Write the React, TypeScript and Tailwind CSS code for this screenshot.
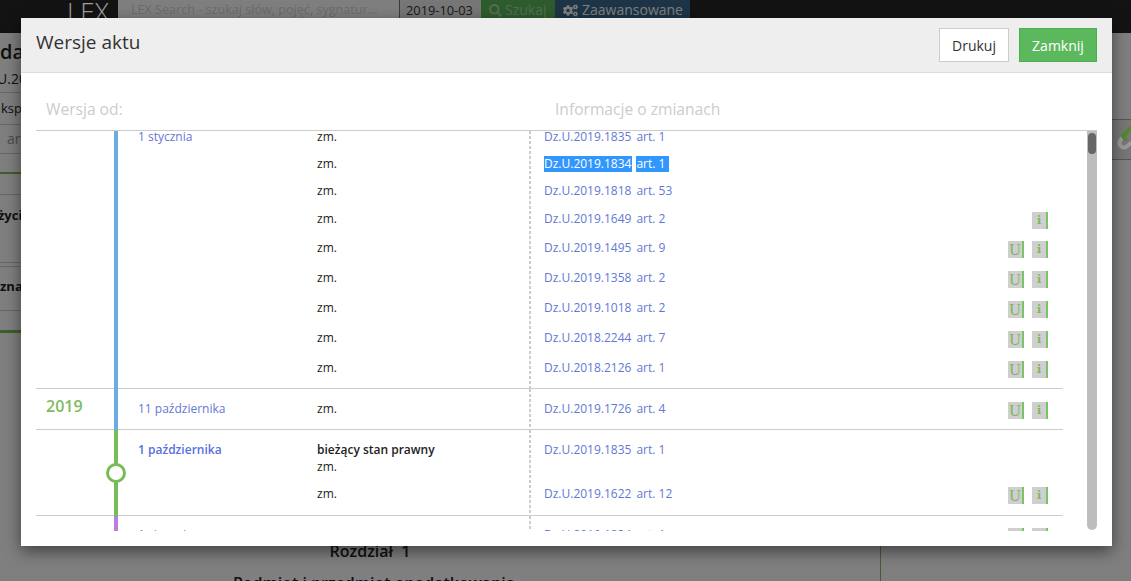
import React from 'react';
import { FaCogs, FaSearch } from 'react-icons/fa';

interface RefRow {
    id: string;
    art: string;
    height: string;
    u?: boolean;
    i?: boolean;
    selected?: boolean;
}

const januaryRows: RefRow[] = [
    { id: "Dz.U.2019.1835", art: "art. 1", height: "h-[27px]" },
    { id: "Dz.U.2019.1834", art: "art. 1", height: "h-[27px]", selected: true },
    { id: "Dz.U.2019.1818", art: "art. 53", height: "h-[27px]" },
    { id: "Dz.U.2019.1649", art: "art. 2", height: "h-[29px]", i: true },
    { id: "Dz.U.2019.1495", art: "art. 9", height: "h-[30px]", u: true, i: true },
    { id: "Dz.U.2019.1358", art: "art. 2", height: "h-[30px]", u: true, i: true },
    { id: "Dz.U.2019.1018", art: "art. 2", height: "h-[30px]", u: true, i: true },
    { id: "Dz.U.2018.2244", art: "art. 7", height: "h-[30px]", u: true, i: true },
    { id: "Dz.U.2018.2126", art: "art. 1", height: "h-[30px]", u: true, i: true },
];

// dotted separator in front of the references column
const dots = "bg-[repeating-linear-gradient(#ccc_0_3px,transparent_3px_5px)] bg-[length:2px_100%] bg-no-repeat";

const Badges: React.FC<{ u?: boolean; i?: boolean }> = ({ u, i }) => (
    <div className="ml-auto mt-[3px] flex gap-[8px] text-[#7db65c]">
        {u && <span className="flex h-[17px] w-4 items-center justify-center border-r-2 border-[#7cc267] bg-[#cfcfcf] font-['Liberation_Serif',serif] text-[16px] leading-none">U</span>}
        {i && <span className="flex h-[17px] w-4 items-center justify-center border-r-2 border-[#7cc267] bg-[#cfcfcf] font-['DejaVu_Serif',serif] text-[11px] font-bold leading-none">i</span>}
    </div>
);

const RefLine: React.FC<{ row: RefRow }> = ({ row }) => (
    <div className={`flex items-center ${row.height}`}>
        <span className={`leading-4 ${row.selected ? 'bg-[#3297fd] text-white' : 'text-[#6378d4]'} pr-px`}>{row.id}</span>
        <span className={`ml-[4px] leading-4 ${row.selected ? 'bg-[#3297fd] pr-[4px] text-white' : 'text-[#6378d4]'}`}>{row.art}</span>
        {(row.u || row.i) && <Badges u={row.u} i={row.i} />}
    </div>
);

const App: React.FC = () => {
    return (
        <div className="relative h-[581px] w-full overflow-hidden bg-white font-['Open_Sans',sans-serif] text-[#222]">

            {/* Page behind the dialog */}
            <header className="flex h-[33px] bg-[#262626] pl-[67px] text-[14px] leading-5">
                <div className="relative z-10 w-[51px] text-[26px] font-light leading-[22px] text-[#a0a0a0]">LEX</div>
                <div className="w-[281px] overflow-hidden whitespace-nowrap bg-[#fff] pl-[13px] text-[12.6px] text-[#d8d8d8]">LEX Search - szukaj słów, pojęć, sygnatur...</div>
                <div className="w-[82px] border-l border-[#777] bg-[#eee] pl-[6px] text-[12.8px] text-[#333]">2019-10-03</div>
                <div className="flex w-[74px] items-start gap-[3px] bg-[#5cb85c] pl-[8px] pt-[3px] text-[#a8d8a0]">
                    <FaSearch size={13} className="mt-[1px]" />
                    <span className="-mt-[3px]">Szukaj</span>
                </div>
                <div className="flex w-[135px] items-start gap-[4px] bg-[#3a6a8e] pl-[8px] pt-[3px] text-white">
                    <FaCogs size={15} />
                    <span className="-mt-[3px]">Zaawansowane</span>
                </div>
            </header>

            <div className="flex">
                <main className="w-[881px] border-r border-[#8fb57d]">
                    <div className="h-[60px] overflow-hidden border-b border-[#ccc] pt-[6px]">
                        <div className="text-[20px] font-semibold leading-[26px]">daw</div>
                        <div className="-ml-[3px] mt-[4px] text-[14px] leading-5">U.20</div>
                    </div>
                    <div className="flex h-[32px] items-center border-b border-[#ccc] pl-px text-[13px]">ksp</div>
                    <div className="flex h-[29px] items-center border-b border-[#ccc] pb-[2px] pl-[7px] text-[14px] text-[#999]">art</div>
                    <div className="h-[20px] border-b-2 border-[#7cbf5b]" />
                    <div className="h-[21px] border-b border-[#ccc]" />
                    <div className="h-[68px] border-b border-[#ccc] pt-[10px] text-[13px] font-bold leading-5">
                        <div className="-ml-[2px]">życi</div>
                    </div>
                    <div className="h-[4px] border-b border-[#ccc]" />
                    <div className="flex h-[44px] items-center border-b border-[#ccc] pb-[4px] text-[13px] font-bold">zna</div>
                    <div className="h-[22px] border-b-[3px] border-[#7cbf5b]" />
                    <div className="w-[744px] pt-[207px] text-center text-[16px] font-semibold">
                        <div className="pr-[4px] leading-[22px]">Rozdział&nbsp; 1</div>
                        <div className="mt-[10px] pl-[4px] leading-[22px]">Podmiot i przedmiot opodatkowania</div>
                    </div>
                </main>
                <aside className="flex-1 overflow-hidden pt-[86px]">
                    <div className="flex h-[41px] items-start justify-end border-y border-[#aaa] bg-[#eee]">
                        <svg viewBox="0 0 28 30" className="relative z-10 -mr-[14px] mt-[1px] h-[30px] w-7 shrink-0" fill="none" strokeWidth="4" strokeLinecap="round" strokeLinejoin="round">
                            <path d="M6 16 L3 20 a4.5 4.5 0 0 0 6 6 L14 22" stroke="#9a9a9a" />
                            <path d="M8 18 L6 15 L16 5" stroke="#4f8a2f" />
                        </svg>
                    </div>
                </aside>
            </div>

            {/* Backdrop */}
            <div className="absolute inset-0 bg-black/50" />

            {/* Dialog */}
            <div className="absolute left-[21px] top-[18px] z-20 h-[528px] w-[1091px] bg-white px-[15px] shadow-[0_5px_15px_rgba(0,0,0,0.5)]">
                <div className="-mx-[15px] flex h-[55px] items-center justify-between border-b border-[#ddd] bg-[#eee] px-[15px]">
                    <h4 className="mb-[6px] text-[19px] leading-6 text-[#333]">Wersje aktu</h4>
                    <div className="flex gap-[10px] text-[14px]">
                        <button className="h-[34px] w-[70px] border border-[#ccc] bg-white text-[#333]">Drukuj</button>
                        <button className="h-[34px] w-[78px] border border-[#4cae4c] bg-[#5cb85c] text-white">Zamknij</button>
                    </div>
                </div>

                <div className="flex h-[58px] items-end border-b border-[#ccc] pb-[9px] pl-[10px] text-[15.6px] leading-6 text-[#ccc]">
                    <div className="w-[509px]">Wersja od:</div>
                    <div>Informacje o zmianach</div>
                </div>

                <div className="flex h-[400px]">
                    <div className="w-[1027px] overflow-hidden text-[12px]">

                        {/* 1 stycznia */}
                        <div className="flex h-[258px] border-b border-[#ccc]">
                            <div className="w-[78px]" />
                            <div className="relative z-10 -mb-px w-1 bg-[#6aade4]" />
                            <div className="w-[199px] pl-[20px]">
                                <div className="-mt-[8px] flex h-[27px] items-center text-[#6378d4]">1 stycznia</div>
                            </div>
                            <div className="w-[212px]">
                                <div className="-mt-[8px]">
                                    {januaryRows.map((row) => (
                                        <div key={row.id} className={`flex items-center ${row.height}`}>zm.</div>
                                    ))}
                                </div>
                            </div>
                            <div className={`relative -mb-px flex-1 pl-[15px] pr-[15px] ${dots}`}>
                                <div className="-mt-[8px]">
                                    {januaryRows.map((row) => (
                                        <RefLine key={row.id} row={row} />
                                    ))}
                                </div>
                            </div>
                        </div>

                        {/* 11 pazdziernika */}
                        <div className="flex h-[41px] border-b border-[#ccc]">
                            <div className="w-[78px] pl-[10px] pt-[6px] text-[16px] font-semibold leading-[22px] text-[#7fba63]">2019</div>
                            <div className="relative z-10 -mb-px w-1 bg-[#6aade4]" />
                            <div className="w-[199px] pl-[20px] pt-[5px]">
                                <div className="flex h-[30px] items-center text-[#6378d4]">11 października</div>
                            </div>
                            <div className="w-[212px] pt-[5px]">
                                <div className="flex h-[30px] items-center">zm.</div>
                            </div>
                            <div className={`relative -mb-px flex-1 pl-[15px] pr-[15px] pt-[5px] ${dots}`}>
                                <RefLine row={{ id: "Dz.U.2019.1726", art: "art. 4", height: "h-[30px]", u: true, i: true }} />
                            </div>
                        </div>

                        {/* 1 pazdziernika, current version */}
                        <div className="flex h-[86px] border-b border-[#ccc]">
                            <div className="w-[78px]" />
                            <div className="relative z-10 -mb-px w-1 bg-[#76bd58]">
                                <div className="absolute left-1/2 top-[33px] h-5 w-5 -translate-x-1/2 rounded-full border-[3px] border-[#76bd58] bg-white" />
                            </div>
                            <div className="w-[199px] pl-[20px] pt-[9px]">
                                <div className="font-semibold leading-[22px] text-[#5a70e0]">1 października</div>
                            </div>
                            <div className="w-[212px] pt-[9px]">
                                <div className="h-[22px] font-semibold leading-[22px]">bieżący stan prawny</div>
                                <div className="h-[12px] leading-[12px]">zm.</div>
                                <div className="mt-[6px] flex h-[30px] items-center">zm.</div>
                            </div>
                            <div className={`relative -mb-px flex-1 pl-[15px] pr-[15px] pt-[9px] ${dots}`}>
                                <div className="h-[40px] leading-[22px] text-[#6378d4]">
                                    Dz.U.2019.1835<span className="ml-[5px]">art. 1</span>
                                </div>
                                <RefLine row={{ id: "Dz.U.2019.1622", art: "art. 12", height: "h-[30px]", u: true, i: true }} />
                            </div>
                        </div>

                        {/* cut off by the scroll area */}
                        <div className="flex h-[30px]">
                            <div className="w-[78px]" />
                            <div className="w-1 bg-[#b87fe0]" />
                            <div className="w-[199px] pl-[20px] pt-[4px]">
                                <div className="flex h-[30px] items-center text-[#6378d4]">1 sierpnia</div>
                            </div>
                            <div className="w-[212px] pt-[4px]">
                                <div className="flex h-[30px] items-center">zm.</div>
                            </div>
                            <div className={`h-[13px] flex-1 overflow-visible pl-[15px] pr-[15px] pt-[4px] ${dots}`}>
                                <RefLine row={{ id: "Dz.U.2019.1834", art: "art. 1", height: "h-[30px]", u: true, i: true }} />
                            </div>
                        </div>
                    </div>

                    {/* Scrollbar */}
                    <div className="ml-[24px] h-[399px] w-[10px] rounded-b-md bg-[#bdbdbd] pt-[2px]">
                        <div className="mx-auto h-[21px] w-[8px] rounded bg-[#666]" />
                    </div>
                </div>
            </div>
        </div>
    );
};

export default App;
